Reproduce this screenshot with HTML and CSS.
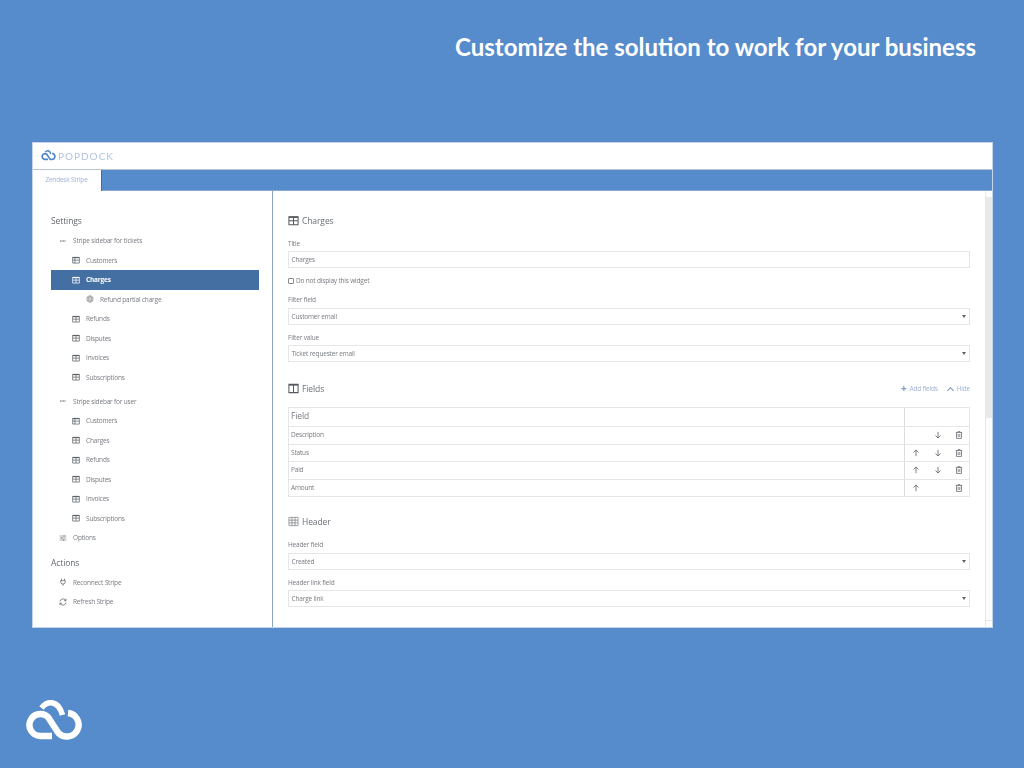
FILE: index.html
```html
<!DOCTYPE html>
<html lang="en">
<head>
<meta charset="utf-8">
<title>Popdock</title>
<link rel="stylesheet" href="styles.css">
</head>
<body>
<svg class="defs" aria-hidden="true">
  <symbol id="i-table" viewBox="0 0 12 12"><path d="M1 2h10v8.6H1zM1 6.2h10M6 2v8.6" fill="none" stroke="currentColor" stroke-width="1.1"/><path d="M1 2.4h10" stroke="currentColor" stroke-width="1.6"/></symbol>
  <symbol id="i-list" viewBox="0 0 12 12"><path d="M1 2h10v8.6H1zM1 6.2h10M4.4 2v8.6" fill="none" stroke="currentColor" stroke-width="1.1"/><path d="M1 2.4h10" stroke="currentColor" stroke-width="1.6"/></symbol>
  <symbol id="i-cols" viewBox="0 0 12 12"><path d="M1 1.5h10v9H1zM6 1.5v9" fill="none" stroke="currentColor" stroke-width="1.1"/><path d="M1 2.2h10" stroke="currentColor" stroke-width="1.4"/></symbol>
  <symbol id="i-head" viewBox="0 0 12 12"><path d="M1 1.5h10v9H1zM1 4.5h10M1 7.5h10M4.3 1.5v9M7.7 1.5v9" fill="none" stroke="currentColor" stroke-width=".6"/></symbol>
  <symbol id="i-globe" viewBox="0 0 12 12"><g fill="none" stroke="currentColor" stroke-width=".7"><circle cx="6" cy="6" r="4.8"/><ellipse cx="6" cy="6" rx="2" ry="4.8"/><path d="M1.4 4.4h9.2M1.4 7.6h9.2"/></g></symbol>
  <symbol id="i-dash" viewBox="0 0 12 12"><path d="M1.5 6h9" stroke="currentColor" stroke-width="1.5" stroke-dasharray="1.6 .6" fill="none"/></symbol>
  <symbol id="i-sliders" viewBox="0 0 12 12"><path d="M1 3h10M1 6h10M1 9h10M7.5 1.6v2.8M4 4.6v2.8M7 7.6v2.8" fill="none" stroke="currentColor" stroke-width=".8"/></symbol>
  <symbol id="i-plug" viewBox="0 0 12 12"><path d="M3.7 1v3M8.3 1v3M2.5 4h7v1.6a3.5 3.5 0 0 1-7 0zM6 9v2.5" fill="none" stroke="currentColor" stroke-width="1.1"/></symbol>
  <symbol id="i-refresh" viewBox="0 0 12 12"><g fill="none" stroke="currentColor" stroke-width="1.1"><path d="M1.5 5.2A4.6 4.6 0 0 1 9.6 3l1 1"/><path d="M10.5 1.2v3H7.6"/><path d="M10.5 6.8A4.6 4.6 0 0 1 2.4 9l-1-1"/><path d="M1.5 10.8v-3h2.9"/></g></symbol>
  <symbol id="i-up" viewBox="0 0 10 10"><path d="M5 9V1.3M1.8 4.4 5 1.2l3.2 3.2" fill="none" stroke="currentColor" stroke-width="1"/></symbol>
  <symbol id="i-down" viewBox="0 0 10 10"><path d="M5 1v7.7M1.8 5.6 5 8.8l3.2-3.2" fill="none" stroke="currentColor" stroke-width="1"/></symbol>
  <symbol id="i-trash" viewBox="0 0 10 10"><path d="M1 2h8M3.6 2V.8h2.8V2M1.9 2v7.3h6.2V2M4 3.8v3.8M6 3.8v3.8" fill="none" stroke="currentColor" stroke-width=".9"/></symbol>
  <symbol id="i-cloud" viewBox="0 0 58 42"><g fill="none" stroke="currentColor" stroke-width="6.4"><path d="M27 36H15A11 11 0 1 1 23 17L33.4 33A11.8 11.8 0 1 0 43 13"/><path stroke-width="5.6" d="M16.5 8C22 1 33-1 37.5 15"/></g></symbol>
</svg>

<main class="slide">
  <h1 class="headline">Customize the solution to work for your business</h1>

  <section class="app">
    <header class="brandbar">
      <svg class="brand-mark"><use href="#i-cloud"/></svg>
      <span class="brand-name">POPDOCK</span>
    </header>
    <nav class="tabbar"><span class="tab">Zendesk Stripe</span></nav>

    <div class="workspace">
      <aside class="sidebar">
        <h2 class="side-title">Settings</h2>
        <ul class="tree">
          <li class="node lvl1"><svg class="ic"><use href="#i-dash"/></svg>Stripe sidebar for tickets</li>
          <li class="node lvl2"><svg class="ic"><use href="#i-list"/></svg>Customers</li>
          <li class="node lvl2 active"><svg class="ic"><use href="#i-table"/></svg>Charges</li>
          <li class="node lvl3"><svg class="ic"><use href="#i-globe"/></svg>Refund partial charge</li>
          <li class="node lvl2"><svg class="ic"><use href="#i-table"/></svg>Refunds</li>
          <li class="node lvl2"><svg class="ic"><use href="#i-table"/></svg>Disputes</li>
          <li class="node lvl2"><svg class="ic"><use href="#i-table"/></svg>Invoices</li>
          <li class="node lvl2"><svg class="ic"><use href="#i-table"/></svg>Subscriptions</li>
          <li class="node lvl1 group"><svg class="ic"><use href="#i-dash"/></svg>Stripe sidebar for user</li>
          <li class="node lvl2"><svg class="ic"><use href="#i-list"/></svg>Customers</li>
          <li class="node lvl2"><svg class="ic"><use href="#i-table"/></svg>Charges</li>
          <li class="node lvl2"><svg class="ic"><use href="#i-table"/></svg>Refunds</li>
          <li class="node lvl2"><svg class="ic"><use href="#i-table"/></svg>Disputes</li>
          <li class="node lvl2"><svg class="ic"><use href="#i-table"/></svg>Invoices</li>
          <li class="node lvl2"><svg class="ic"><use href="#i-table"/></svg>Subscriptions</li>
          <li class="node lvl1"><svg class="ic"><use href="#i-sliders"/></svg>Options</li>
        </ul>
        <h2 class="side-title actions">Actions</h2>
        <ul class="tree">
          <li class="node lvl1"><svg class="ic"><use href="#i-plug"/></svg>Reconnect Stripe</li>
          <li class="node lvl1"><svg class="ic"><use href="#i-refresh"/></svg>Refresh Stripe</li>
        </ul>
      </aside>

      <div class="content">
        <div class="form">
          <h3 class="sec"><svg class="sec-ic"><use href="#i-table"/></svg>Charges</h3>
          <label class="lbl first">Title</label>
          <div class="field">Charges</div>
          <div class="check"><span class="box"></span>Do not display this widget</div>
          <label class="lbl tight">Filter field</label>
          <div class="field select">Customer email</div>
          <label class="lbl">Filter value</label>
          <div class="field select">Ticket requester email</div>

          <div class="sec-row">
            <h3 class="sec"><svg class="sec-ic"><use href="#i-cols"/></svg>Fields</h3>
            <div class="links"><span class="plus">+</span><span>Add fields</span><span class="chev"></span><span>Hide</span></div>
          </div>
          <div class="grid">
            <div class="row head"><div class="cell name">Field</div><div class="cell ops"></div></div>
            <div class="row"><div class="cell name">Description</div><div class="cell ops"><span></span><svg class="op"><use href="#i-down"/></svg><svg class="op"><use href="#i-trash"/></svg></div></div>
            <div class="row"><div class="cell name">Status</div><div class="cell ops"><svg class="op"><use href="#i-up"/></svg><svg class="op"><use href="#i-down"/></svg><svg class="op"><use href="#i-trash"/></svg></div></div>
            <div class="row"><div class="cell name">Paid</div><div class="cell ops"><svg class="op"><use href="#i-up"/></svg><svg class="op"><use href="#i-down"/></svg><svg class="op"><use href="#i-trash"/></svg></div></div>
            <div class="row"><div class="cell name">Amount</div><div class="cell ops"><svg class="op"><use href="#i-up"/></svg><span></span><svg class="op"><use href="#i-trash"/></svg></div></div>
          </div>

          <h3 class="sec header-sec"><svg class="sec-ic"><use href="#i-head"/></svg>Header</h3>
          <label class="lbl header-lbl">Header field</label>
          <div class="field select">Created</div>
          <label class="lbl">Header link field</label>
          <div class="field select">Charge link</div>
        </div>
        <div class="scrollbar"><div class="thumb"></div><div class="track"></div><div class="step"></div></div>
      </div>
    </div>
  </section>

  <svg class="corner-logo" role="img" aria-label="Popdock"><use href="#i-cloud"/></svg>
</main>
</body>
</html>
```

FILE: styles.css
```css
* { box-sizing: border-box; }
html, body { margin: 0; padding: 0; }
body { width: 1024px; height: 768px; overflow: hidden; background: #568ccb; font-family: "Open Sans", "Noto Sans", sans-serif; }
.defs { display: none; }
.slide { width: 1024px; height: 768px; display: flex; flex-direction: column; padding: 32px 31px 0 32px; position: relative; }
.headline { margin: 0 17px 0 0; height: 110px; text-align: right; font: 700 24px/30px Lato, sans-serif; color: #fff; }

.app { width: 961px; height: 486px; background: #fff; display: flex; flex-direction: column; filter: blur(.4px); outline: 1px solid #c4d5ea; outline-offset: -1px; }
.brandbar { height: 28px; display: flex; align-items: center; padding-left: 9px; border-bottom: 1px solid #b9c4d0; }
.brand-mark { width: 15px; height: 11px; color: #4a86c8; margin-right: 2px; overflow: visible; }
.brand-name { font: 400 10px/12px Lato, sans-serif; letter-spacing: 1px; color: #b0c4e0; }
.tabbar { height: 21px; background: #568ccb; border-bottom: 1px solid #8aa9cf; display: flex; }
.tab { width: 70px; height: 21px; background: #fff; border-right: 1px solid #3f6da3; text-align: center; font-size: 6.5px; letter-spacing: -.2px; line-height: 20px; color: #9fb3d8; }

.workspace { flex: 1; display: flex; min-height: 0; }
.sidebar { width: 241px; border-right: 1px solid #8fa5bf; padding: 23px 13px 0 19px; color: #777b80; }
.side-title { margin: 0; font-size: 8.5px; letter-spacing: -.1px; line-height: 13px; font-weight: 400; color: #64686e; }
.side-title.actions { margin-top: 8px; }
.tree { list-style: none; margin: 4px 0 0; padding: 0; }
.node { height: 19.5px; display: flex; align-items: center; font-size: 6.5px; letter-spacing: -.18px; white-space: nowrap; color: #777b80; }
.ic { width: 8px; height: 8px; margin-right: 6px; flex: none; color: #5c6066; }
.lvl1 { padding-left: 8px; }
.lvl2 { padding-left: 21px; }
.lvl3 { padding-left: 35px; }
.group { margin-top: 4.5px; }
.active { background: #436fa3; color: #fff; font-weight: 700; }
.active .ic { color: #fff; }

.content { flex: 1; display: flex; min-width: 0; }
.form { flex: 1; padding: 23px 15px 0 15px; color: #777b80; }
.scrollbar { width: 8px; display: flex; flex-direction: column; padding-top: 6px; background: #fcfcfc; border-left: 1px solid #e8e8e8; }
.thumb { height: 221px; background: #e9e9e9; }
.track { flex: 1; }
.step { height: 8px; border-top: 1px solid #e8e8e8; }

.sec { margin: 0; display: flex; align-items: center; font-size: 8.5px; letter-spacing: -.1px; line-height: 13px; font-weight: 400; color: #6b6f75; }
.sec-ic { width: 11px; height: 11px; margin-right: 3px; color: #55595f; }
.lbl { display: block; font-size: 6.5px; letter-spacing: -.18px; line-height: 9px; color: #777b80; margin: 8px 0 3px; }
.lbl.first { margin-top: 12px; }
.lbl.tight { margin-top: 10px; margin-bottom: 4px; }
.lbl.header-lbl { margin: 12px 0 4px; }
.field { height: 17px; border: 1px solid #e6e6e6; padding-left: 2.5px; font-size: 6.5px; letter-spacing: -.18px; line-height: 15px; color: #777b80; position: relative; }
.select::after { content: ""; position: absolute; right: 3px; top: 6px; border: 2px solid transparent; border-top: 3px solid #5f6368; border-bottom: 0; }
.check { display: flex; align-items: center; height: 9px; margin-top: 8px; font-size: 6.5px; letter-spacing: -.18px; color: #777b80; }
.box { width: 6px; height: 6px; border: 1px solid #8a8a8a; border-radius: 1px; margin-right: 2px; }

.sec-row { display: flex; justify-content: space-between; align-items: center; margin-top: 20px; }
.links { display: flex; align-items: center; font-size: 6.5px; letter-spacing: -.18px; color: #9fb2d6; }
.plus { font-size: 10px; line-height: 9px; font-weight: 700; color: #7d9ac8; margin-right: 3px; }
.chev { width: 5px; height: 5px; border-left: 1px solid #7d9ac8; border-top: 1px solid #7d9ac8; transform: rotate(45deg); margin: 3px 4px 0 10px; }

.grid { margin-top: 12px; border: 1px solid #e6e6e6; }
.row { display: flex; height: 17.5px; border-top: 1px solid #e6e6e6; }
.row.head { height: 18px; border-top: 0; }
.cell { display: flex; align-items: center; font-size: 6.5px; letter-spacing: -.18px; color: #777b80; }
.name { flex: 1; padding: 0 0 1px 2px; }
.head .name { font-size: 8.5px; letter-spacing: -.1px; padding: 0 0 3px 2px; }
.ops { width: 65px; border-left: 1px solid #dcdcdc; padding-left: 7px; gap: 13.5px; }
.ops span, .op { width: 8px; height: 8px; flex: none; color: #5c6066; }

.header-sec { margin-top: 18px; }
.corner-logo { position: absolute; left: 25px; top: 700px; width: 58px; height: 42px; color: #fff; overflow: visible; }
```
